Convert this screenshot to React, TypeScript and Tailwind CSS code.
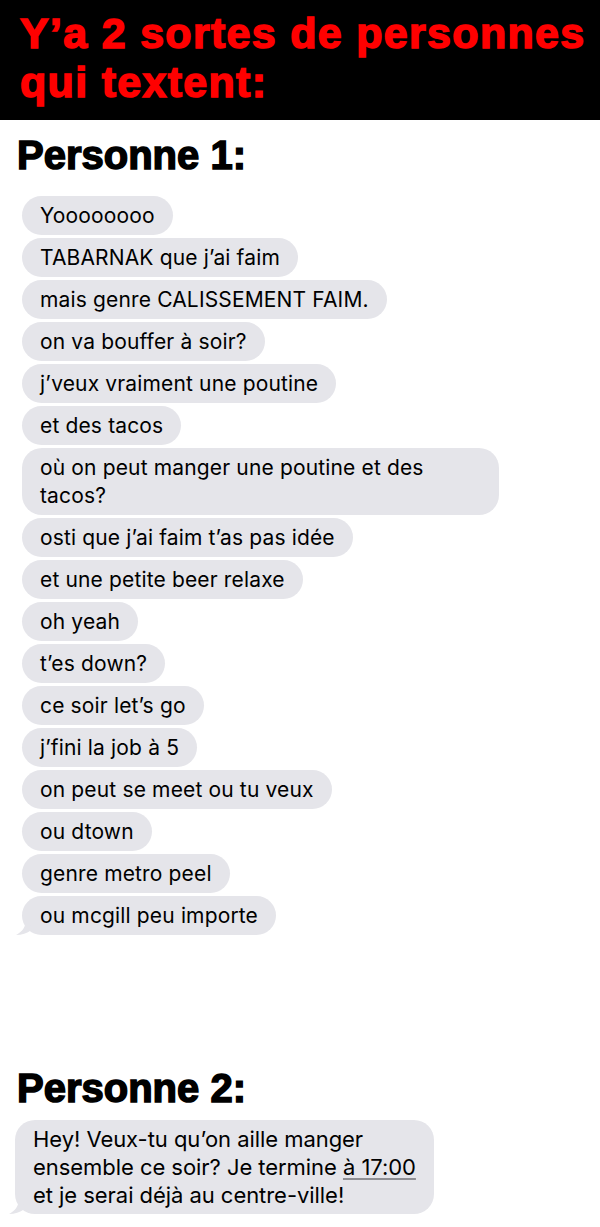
const messages = [
  "Yoooooooo",
  "TABARNAK que j’ai faim",
  "mais genre CALISSEMENT FAIM.",
  "on va bouffer à soir?",
  "j’veux vraiment une poutine",
  "et des tacos",
  "où on peut manger une poutine et des tacos?",
  "osti que j’ai faim t’as pas idée",
  "et une petite beer relaxe",
  "oh yeah",
  "t’es down?",
  "ce soir let’s go",
  "j’fini la job à 5",
  "on peut se meet ou tu veux",
  "ou dtown",
  "genre metro peel",
  "ou mcgill peu importe",
];

function Tail() {
  return (
    <svg className="absolute left-[-6px] bottom-0" width="16" height="16" viewBox="0 0 16 16">
      <path d="M10 0 C10 8 6 13 0 16 C6 16 11 14 14 12 L16 0 Z" fill="#e5e5ea" />
    </svg>
  );
}

export default function App() {
  return (
    <div className="w-[600px] h-[1227px] bg-white overflow-hidden [font-family:Inter,sans-serif] text-black">
      {/* Title banner */}
      <header className="bg-black h-[120px] pt-[9px] px-[20px]">
        <h1 className="[font-family:'Liberation_Sans',Arial,sans-serif] font-bold text-[43px] leading-[49px] tracking-[1.3px] whitespace-nowrap text-[#ff0000] [-webkit-text-stroke:1.5px_#ff0000]">
          Y’a 2 sortes de personnes
          <br />
          qui textent:
        </h1>
      </header>

      {/* Personne 1 */}
      <section className="px-[17px] mt-[12px]">
        <h2 className="[font-family:'Liberation_Sans',Arial,sans-serif] font-bold text-[40px] leading-[46px] [-webkit-text-stroke:1.5px_#000]">
          Personne 1:
        </h2>
        <div className="mt-[18px] pl-[5px] flex flex-col items-start gap-[3px]">
          {messages.map((m, i) => (
            <div
              key={i}
              className="relative max-w-[477px] bg-[#e5e5ea] rounded-[20px] px-[18px] py-[5.5px] text-[21px] leading-[28px] tracking-[0.15px]"
            >
              {i === messages.length - 1 && <Tail />}
              <span className="relative">{m}</span>
            </div>
          ))}
        </div>
      </section>

      {/* Personne 2 */}
      <section className="px-[17px] mt-[130px]">
        <h2 className="[font-family:'Liberation_Sans',Arial,sans-serif] font-bold text-[40px] leading-[46px] [-webkit-text-stroke:1.5px_#000]">
          Personne 2:
        </h2>
        <div className="mt-[9px] flex flex-col items-start">
          <div className="relative ml-[-2px] bg-[#e5e5ea] rounded-[20px] px-[18px] py-[5px] text-[22px] leading-[28px] tracking-[-0.05px]">
            <Tail />
            <span className="relative">
              Hey! Veux-tu qu’on aille manger
              <br />
              ensemble ce soir? Je termine{" "}
              <span className="underline decoration-[#8e8e93] underline-offset-[3px]">à 17:00</span>
              <br />
              et je serai déjà au centre-ville!
            </span>
          </div>
        </div>
      </section>
    </div>
  );
}
